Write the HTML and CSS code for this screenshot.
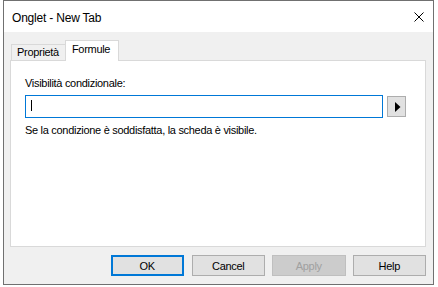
FILE: index.html
```html
<!DOCTYPE html>
<html>
<head>
<meta charset="utf-8">
<link rel="stylesheet" href="styles.css">
</head>
<body>
<div class="window">
  <div class="titlebar">
    <span class="title">Onglet - New Tab</span>
    <svg class="close" width="10" height="10" viewBox="0 0 10 10"><path d="M0.5 0.5 L9.5 9.5 M9.5 0.5 L0.5 9.5" stroke="#000" stroke-width="1" fill="none"/></svg>
  </div>
  <div class="body">
    <div class="tabs">
      <div class="tab">Proprietà</div>
      <div class="tab selected">Formule</div>
    </div>
    <div class="panel">
      <div class="label">Visibilità condizionale:</div>
      <div class="row">
        <div class="input"><span class="caret"></span></div>
        <div class="arrow-btn"><svg width="6" height="10" viewBox="0 0 6 10"><path d="M0 0 L5.5 5 L0 10 Z" fill="#000"/></svg></div>
      </div>
      <div class="hint">Se la condizione è soddisfatta, la scheda è visibile.</div>
    </div>
    <div class="buttons">
      <div class="btn ok">OK</div>
      <div class="btn cancel">Cancel</div>
      <div class="btn disabled">Apply</div>
      <div class="btn help">Help</div>
    </div>
  </div>
</div>
</body>
</html>
```
FILE: styles.css
```css
html, body {
  margin: 0;
  padding: 0;
  background: #ffffff;
}
body {
  font-family: "Liberation Sans", Arial, sans-serif;
  font-size: 11px;
  letter-spacing: -0.3px;
  color: #000;
}
.window {
  margin-left: 3px;
  width: 429px;
  height: 283px;
  border: 1px solid #707070;
  background: #f0f0f0;
  display: flex;
  flex-direction: column;
}
.titlebar {
  height: 31px;
  background: #ffffff;
  display: flex;
  align-items: flex-start;
  justify-content: space-between;
  padding: 0 9px 0 8px;
}
.title {
  font-size: 12px;
  line-height: 14px;
  letter-spacing: -0.2px;
  margin-top: 10px;
}
.close {
  margin-top: 11px;
}
.body {
  flex: 1;
  display: flex;
  flex-direction: column;
  padding: 8px 7px 0 6px;
}
.tabs {
  display: flex;
  align-items: flex-end;
  height: 20px;
  padding-left: 1px;
}
.tab {
  height: 15px;
  border: 1px solid #d9d9d9;
  border-bottom: none;
  padding: 1px 6px 0 5px;
  height: 14px;
  line-height: 13px;
  background: #f0f0f0;
  box-sizing: content-box;
}
.tab.selected {
  background: #ffffff;
  line-height: 13px;
  padding: 2px 8px 0 6px;
  height: 18px;
  margin-bottom: -1px;
  margin-left: -1px;
  position: relative;
  z-index: 1;
}
.panel {
  height: 185px;
  border: 1px solid #d9d9d9;
  background: #ffffff;
  padding: 0 0 0 14px;
  display: flex;
  flex-direction: column;
}
.label {
  margin-top: 16px;
  height: 13px;
  line-height: 13px;
}
.row {
  display: flex;
  margin-top: 5px;
  height: 23px;
}
.input {
  width: 356px;
  height: 21px;
  border: 1px solid #0078d7;
  position: relative;
}
.caret {
  position: absolute;
  left: 5px;
  top: 4px;
  width: 1px;
  height: 11px;
  background: #000;
}
.arrow-btn {
  margin-left: 4px;
  margin-top: 1px;
  width: 17px;
  height: 19px;
  border: 1px solid #adadad;
  background: #e1e1e1;
  display: flex;
  align-items: center;
  justify-content: center;
}
.arrow-btn svg {
  margin-left: 2px;
}
.hint {
  margin-top: 6px;
  height: 13px;
  line-height: 13px;
}
.buttons {
  display: flex;
  margin-top: 8px;
  padding-left: 101px;
}
.btn {
  width: 72px;
  height: 19px;
  border: 1px solid #adadad;
  background: #e1e1e1;
  display: flex;
  align-items: center;
  justify-content: center;
  margin-right: 7px;
}
.btn.ok {
  width: 69px;
  height: 17px;
  border: 2px solid #0078d7;
  margin-right: 8px;
}
.btn.disabled {
  background: #cccccc;
  border-color: #bfbfbf;
  color: #a0a0a0;
}
.btn.help {
  margin-right: 0;
}
```
